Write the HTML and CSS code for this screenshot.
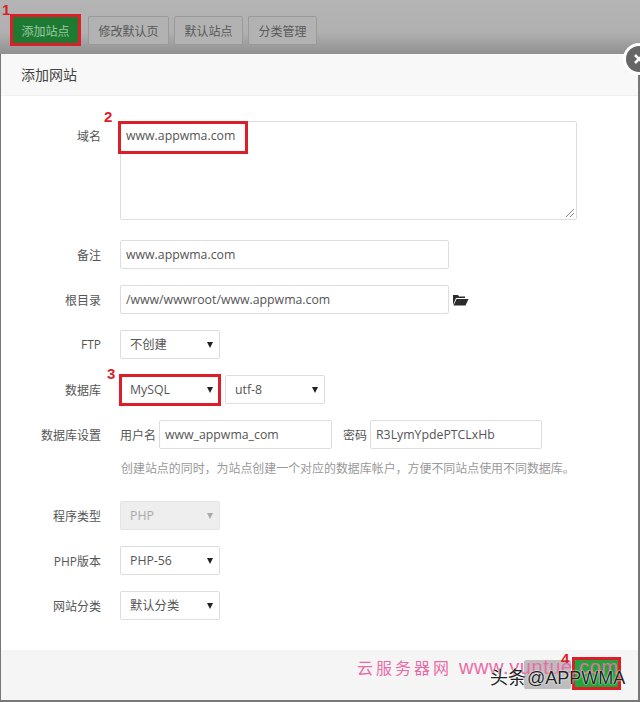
FILE: index.html
```
<!DOCTYPE html>
<html lang="zh">
<head>
<meta charset="utf-8">
<title>添加网站</title>
<link rel="stylesheet" href="styles.css">
</head>
<body>
<div class="screen">
  <div class="toolbar">
    <span class="btn btn-green">添加站点</span>
    <span class="btn">修改默认页</span>
    <span class="btn">默认站点</span>
    <span class="btn">分类管理</span>
  </div>
  <div class="modal">
    <div class="modal-head">添加网站</div>
    <div class="modal-body">
      <div class="row row-area"><label class="lab">域名</label>
        <div class="field textarea">www.appwma.com
          <svg class="grip" width="10" height="10" viewBox="0 0 10 10"><path d="M1 9 9 1M5 9 9 5" stroke="#888" fill="none"/></svg>
        </div></div>
      <div class="row"><label class="lab">备注</label><div class="field w-329">www.appwma.com</div></div>
      <div class="row"><label class="lab">根目录</label><div class="field w-329">/www/wwwroot/www.appwma.com</div>
        <svg class="folder" width="17" height="13" viewBox="0 0 17 13"><path d="M1 12V2h5l1 1.500h6v1.500H4L1 12ZM4.500 6H16.500L13.500 12.500H1.500Z" fill="#2b2b2b"/></svg>
      </div>
      <div class="row"><label class="lab">FTP</label><div class="field select w-100">不创建</div></div>
      <div class="row"><label class="lab">数据库</label><div class="field select w-100">MySQL</div><div class="field select w-100 ml-5">utf-8</div></div>
      <div class="row"><label class="lab">数据库设置</label><span class="inline-lab">用户名</span><div class="field w-173">www_appwma_com</div><span class="inline-lab ml-11">密码</span><div class="field w-172">R3LymYpdePTCLxHb</div></div>
      <p class="help">创建站点的同时，为站点创建一个对应的数据库帐户，方便不同站点使用不同数据库。</p>
      <div class="row"><label class="lab">程序类型</label><div class="field select w-100 disabled">PHP</div></div>
      <div class="row"><label class="lab">PHP版本</label><div class="field select w-100">PHP-56</div></div>
      <div class="row"><label class="lab">网站分类</label><div class="field select w-100">默认分类</div></div>
    </div>
    <div class="modal-foot">
      <span class="foot-btn foot-gray"></span>
      <span class="foot-btn foot-green"></span>
    </div>
  </div>
  <div class="close"><svg width="12" height="12" viewBox="0 0 12 12"><path d="M2 2 10 10M10 2 2 10" stroke="#fff" stroke-width="2.600"/></svg></div>

  <div class="mark" id="m1"></div><span class="num" id="n1">1</span>
  <div class="mark" id="m2"></div><span class="num" id="n2">2</span>
  <div class="mark" id="m3"></div><span class="num" id="n3">3</span>
  <div class="mark" id="m4"></div><span class="num" id="n4">4</span>

  <div class="wm-pink"><span class="wm-cn">云服务器网</span><span class="wm-en">www.yuntue.com</span></div>
  <div class="wm-toutiao"><span>头条</span><span>@APPWMA</span></div>
</div>
</body>
</html>
```
FILE: styles.css
```
* { box-sizing: border-box; }
html, body { margin: 0; padding: 0; }
body {
  width: 640px; height: 702px; overflow: hidden; background: #777;
  font-family: "Open Sans", "Noto Sans CJK SC", sans-serif;
  font-size: 13px; color: #555;
}
.screen { position: relative; width: 640px; height: 702px; overflow: hidden; }

.toolbar {
  height: 54px; padding: 16px 0 0 12px; display: flex; gap: 5px; align-items: flex-start;
  background: linear-gradient(#b4b4b4 0, #b0b0b0 60%, #909090 100%);
}
.btn {
  height: 29px; padding: 0 9.500px; line-height: 29px; font-size: 12px; color: #595959;
  border: 1px solid #9a9a9a; border-radius: 2px; background: #b2b2b2; white-space: nowrap;
}
.btn-green { background: #1e7a32; border-color: #1e7a32; color: #9ccaa6; width: 67px; padding: 0; margin-right: 4px; text-align: center; }

.modal { width: 639px; margin-left: 1px; background: #fff; border-right: 2px solid #777; height: 646px; display: flex; flex-direction: column; }
.modal-head { height: 42px; padding: 0 20px; line-height: 42px; font-size: 14px; color: #444; background: #f8f8f8; border-bottom: 1px solid #f0f0f0; }
.modal-body { flex: 1; padding-top: 25px; }
.row { display: flex; align-items: center; height: 29px; margin-bottom: 16px; }
.row-area { height: 99px; margin-bottom: 20px; align-items: flex-start; }
.row-area .lab { line-height: 32px; }
.lab { width: 100px; margin-right: 19px; text-align: right; font-size: 12px; color: #555; }
.field {
  position: relative; height: 29px; padding: 0 5px; line-height: 27px; font-size: 12.300px; color: #555;
  border: 1px solid #ddd; border-radius: 2px; background: #fff; white-space: nowrap;
}
.textarea { width: 457px; height: 99px; padding-top: 0; }
.grip { position: absolute; right: 1px; bottom: 1px; }
.w-329 { width: 329px; }
.w-100 { width: 100px; }
.w-173 { width: 173px; }
.w-172 { width: 172px; }
.ml-5 { margin-left: 5px; }
.ml-11 { margin-left: 11px; }
.select { padding-left: 9px; }
.select::after {
  content: ""; position: absolute; right: 6px; top: 11px;
  border-left: 3.500px solid transparent; border-right: 3.500px solid transparent; border-top: 6px solid #222;
}
.disabled { background: #eee; color: #aaa; border-color: #e4e4e4; }
.disabled::after { border-top-color: #aaa; }
.folder { margin-left: 3px; }
.inline-lab { font-size: 12px; margin-right: 3px; color: #555; }
.help { margin: -6px 0 0 120px; height: 42px; line-height: 20px; font-size: 11.950px; color: #999; white-space: nowrap; }

.modal-foot { height: 50px; background: #f5f5f5; display: flex; justify-content: flex-end; gap: 3px; padding: 10px 18px 0 0; }
.foot-btn { height: 29px; border-radius: 2px; }
.foot-gray { width: 47px; background: #bdbdbd; }
.foot-green { width: 46px; background: #20a53a; }

.close {
  position: absolute; left: 623px; top: 43px; width: 32px; height: 32px; border-radius: 50%;
  background: #666; border: 3px solid #fff; display: flex; align-items: center; justify-content: center;
}

.mark { position: absolute; border: 3px solid #dc1e28; }
#m1 { left: 10px; top: 14px; width: 71px; height: 32px; }
#m2 { left: 118px; top: 121px; width: 130px; height: 33px; }
#m3 { left: 119px; top: 374px; width: 102px; height: 32px; }
#m4 { left: 572px; top: 657px; width: 49px; height: 33px; }
.num { position: absolute; font: bold 15px/16px "Liberation Sans", sans-serif; color: #dc1e28; }
#n1 { left: 2px; top: 2px; }
#n2 { left: 104px; top: 109px; }
#n3 { left: 107px; top: 366px; }
#n4 { left: 561px; top: 651px; }

.wm-pink { position: absolute; left: 357px; top: 656px; display: flex; align-items: center; gap: 7px; height: 22px; color: #ea6ca6; white-space: nowrap; }
.wm-cn { font: 16px/22px "Noto Sans CJK SC", sans-serif; letter-spacing: 3px; }
.wm-en { font: 20px/22px "Liberation Sans", sans-serif; letter-spacing: .6px; }
.wm-toutiao { position: absolute; left: 490px; top: 667px; display: flex; gap: 1px; height: 22px; font: 18px/22px "Liberation Sans", "Noto Sans CJK SC", sans-serif; color: #222; text-shadow: 0 0 2px #fff, 0 0 1px #fff; white-space: nowrap; }
```
